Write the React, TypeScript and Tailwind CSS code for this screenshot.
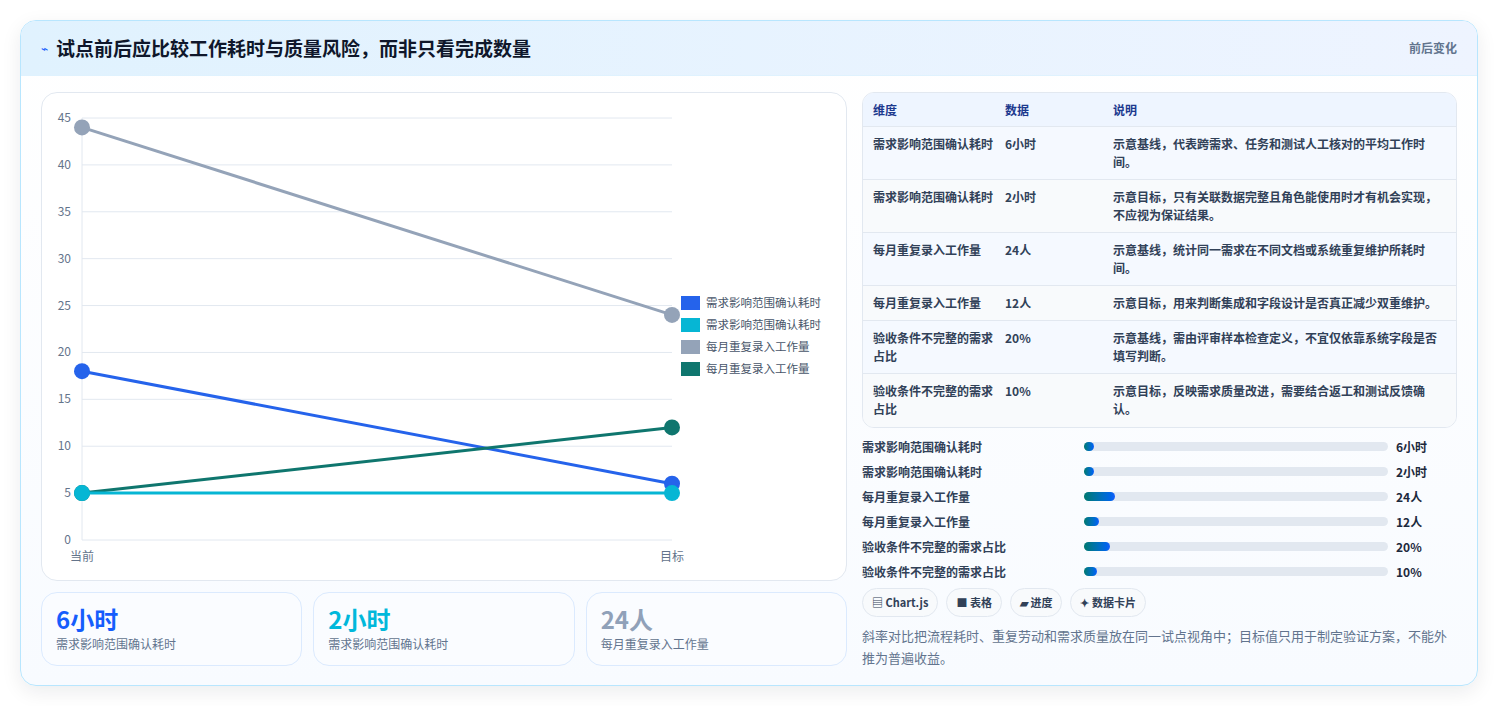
import React from "react";

const F = { fontFamily: '"Noto Sans CJK SC", "Noto Sans", sans-serif' };

const X0 = 40, X1 = 630, YT = 25, YB = 447;
const y = (v: number) => YB - (v / 45) * (YB - YT);

const series = [
  { c: "#2563eb", a: 18, b: 6, name: "需求影响范围确认耗时" },
  { c: "#06b6d4", a: 5, b: 5, name: "需求影响范围确认耗时" },
  { c: "#94a3b8", a: 44, b: 24, name: "每月重复录入工作量" },
  { c: "#0f766e", a: 5, b: 12, name: "每月重复录入工作量" },
];

function Chart() {
  const ticks = [0, 5, 10, 15, 20, 25, 30, 35, 40, 45];
  return (
    <svg width="806" height="487" className="block" style={F}>
      {ticks.map((t) => (
        <g key={t}>
          <line x1={X0} x2={X1} y1={y(t)} y2={y(t)} stroke="#e2e8f0" strokeWidth="1" />
          <text x={29} y={y(t) + 4} fontSize="12" fill="#64748b" textAnchor="end">{t}</text>
        </g>
      ))}
      <line x1={X0} x2={X0} y1={YT} y2={YB} stroke="#e2e8f0" />
      <text x={X0} y={468} fontSize="12" fill="#64748b" textAnchor="middle">当前</text>
      <text x={X1} y={468} fontSize="12" fill="#64748b" textAnchor="middle">目标</text>
      {[series[2], series[0], series[3], series[1]].map((s, i) => (
        <g key={i}>
          <line x1={X0} y1={y(s.a)} x2={X1} y2={y(s.b)} stroke={s.c} strokeWidth="3" />
          <circle cx={X0} cy={y(s.a)} r="8" fill={s.c} />
          <circle cx={X1} cy={y(s.b)} r="8" fill={s.c} />
        </g>
      ))}
      {series.map((s, i) => (
        <g key={"l" + i}>
          <rect x={639} y={203 + i * 22} width={19} height={14} fill={s.c} />
          <text x={664} y={214 + i * 22} fontSize="11.5" fill="#475569">{s.name}</text>
        </g>
      ))}
    </svg>
  );
}

const rows = [
  ["需求影响范围确认耗时", "6小时", "示意基线，代表跨需求、任务和测试人工核对的平均工作时间。"],
  ["需求影响范围确认耗时", "2小时", "示意目标，只有关联数据完整且角色能使用时才有机会实现，不应视为保证结果。"],
  ["每月重复录入工作量", "24人", "示意基线，统计同一需求在不同文档或系统重复维护所耗时间。"],
  ["每月重复录入工作量", "12人", "示意目标，用来判断集成和字段设计是否真正减少双重维护。"],
  ["验收条件不完整的需求占比", "20%", "示意基线，需由评审样本检查定义，不宜仅依靠系统字段是否填写判断。"],
  ["验收条件不完整的需求占比", "10%", "示意目标，反映需求质量改进，需要结合返工和测试反馈确认。"],
];
const heights = ["h-[53px]", "h-[53px]", "h-[53px]", "h-[35px]", "h-[53px]", "h-[53px]"];
const bars = [10, 10, 31, 15, 26, 13];

export default function App() {
  return (
    <div className="min-h-[706px] bg-white px-5 pt-5" style={F}>
      <div className="h-[666px] rounded-2xl border border-sky-200 bg-gradient-to-b from-white to-[#f8fbff] shadow-[0_6px_20px_rgba(15,23,42,0.08)] overflow-hidden">
        <div className="flex h-[55px] items-center justify-between border-b border-sky-100 bg-gradient-to-r from-[#e0f2fe] to-[#eef4ff] px-5">
          <div className="flex items-center gap-2">
            <span className="text-[12px] text-blue-600">⌁</span>
            <span className="text-[19px] font-bold text-slate-900">试点前后应比较工作耗时与质量风险，而非只看完成数量</span>
          </div>
          <span className="text-[12px] font-semibold text-slate-500">前后变化</span>
        </div>
        <div className="flex gap-[15px] px-5 pt-4">
          <div className="flex w-[806px] flex-col gap-[11px]">
            <div className="h-[489px] rounded-2xl border border-slate-200 bg-white"><Chart /></div>
            <div className="grid grid-cols-3 gap-[11px]">
              {[["6小时", "text-blue-600", "需求影响范围确认耗时"], ["2小时", "text-cyan-500", "需求影响范围确认耗时"], ["24人", "text-slate-400", "每月重复录入工作量"]].map(([v, c, l], i) => (
                <div key={i} className="h-[74px] rounded-2xl border border-blue-100 bg-[#fafcff] px-[14px] pt-[10px]">
                  <div className={`text-[24px] font-bold leading-[32px] ${c}`}>{v}</div>
                  <div className="text-[12px] text-slate-500">{l}</div>
                </div>
              ))}
            </div>
          </div>
          <div className="flex w-[598px] flex-col">
            <div className="overflow-hidden rounded-xl border border-slate-200 text-[12px] font-semibold text-slate-700">
              <div className="flex h-[34px] items-center border-b border-slate-200 bg-[#eef5ff] text-blue-900">
                <div className="w-[142px] pl-[10px]">维度</div>
                <div className="w-[108px]">数据</div>
                <div className="flex-1">说明</div>
              </div>
              {rows.map((r, i) => (
                <div key={i} className={`flex ${heights[i]} items-start border-b border-slate-200 pt-[8px] last:border-b-0 ${i % 2 ? "bg-[#f8fafc]" : "bg-[#f5f9ff]"}`}>
                  <div className="w-[142px] pl-[10px] pr-3 leading-[18px]">{r[0]}</div>
                  <div className="w-[108px] leading-[18px]">{r[1]}</div>
                  <div className="flex-1 pr-3 leading-[18px]">{r[2]}</div>
                </div>
              ))}
            </div>
            <div className="mt-[6px] flex flex-col">
              {rows.map((r, i) => (
                <div key={i} className="flex h-[25px] items-center text-[12px] font-semibold text-slate-700">
                  <div className="w-[222px]">{r[0]}</div>
                  <div className="h-[9px] w-[304px] rounded-full bg-slate-200">
                    <div className="h-full rounded-full bg-gradient-to-r from-teal-700 to-blue-600" style={{ width: bars[i] }} />
                  </div>
                  <div className="pl-2 font-bold text-slate-800">{r[1]}</div>
                </div>
              ))}
            </div>
            <div className="mt-[4px] flex gap-2 text-[11px] font-semibold text-slate-700">
              {["▤ Chart.js", "■ 表格", "▰ 进度", "✦ 数据卡片"].map((t) => (
                <span key={t} className="rounded-full border border-slate-200 bg-[#f8fafc] px-[9px] py-[5px]">{t}</span>
              ))}
            </div>
            <p className="mt-[8px] text-[13px] leading-[22px] text-slate-500">斜率对比把流程耗时、重复劳动和需求质量放在同一试点视角中；目标值只用于制定验证方案，不能外推为普遍收益。</p>
          </div>
        </div>
      </div>
    </div>
  );
}
